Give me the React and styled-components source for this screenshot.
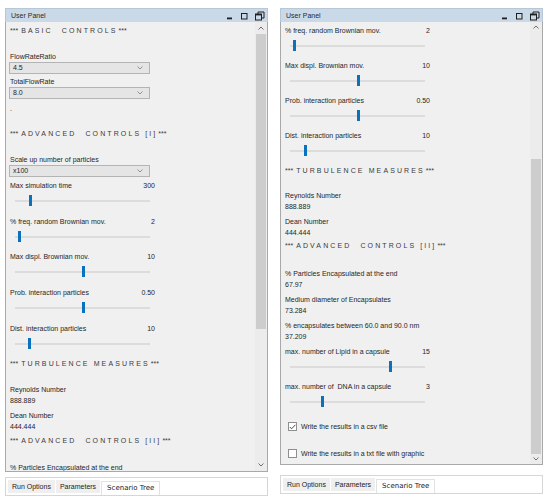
import React from 'react';
import styled, {createGlobalStyle} from 'styled-components';

const GlobalStyle = createGlobalStyle`
   body {
      margin: 0;
      background: #ffffff;
      font-family: "Liberation Sans", Arial, sans-serif;
   }
`;

const Page = styled.div`
   display: flex;
   align-items: flex-start;
   gap: 12px;
   padding: 8px 0 0 5px;
`;

const Window = styled.div`
   width: 263px;
   display: flex;
   flex-direction: column;
`;

const TitleBar = styled.div`
   box-sizing: border-box;
   height: 14px;
   display: flex;
   align-items: center;
   padding: 0 2px 0 5px;
   background: #c9d9e8;
   border: 1px solid #b7c7d6;
   border-bottom: none;
   font-size: 7px;
   color: #2b2b2b;
`;

const Title = styled.div`
   flex: 1;
`;

const TitleIcons = styled.div`
   display: flex;
   align-items: center;
   gap: 7px;
`;

const Body = styled.div`
   box-sizing: border-box;
   height: ${p => p.$height}px;
   display: flex;
   background: #f0f0f0;
   border: 1px solid #a9a9a9;
   border-top: none;
`;

const Content = styled.div`
   flex: 1;
   overflow: hidden;
   padding: 3px 0 0 4px;
   font-size: 7px;
   line-height: 11px;
   color: #262626;
`;

const ScrollBar = styled.div`
   width: 12px;
   display: flex;
   flex-direction: column;
   background: #ececec;
`;

const ScrollArrow = styled.div`
   height: 12px;
   display: flex;
   align-items: center;
   justify-content: center;
`;

const ScrollTrack = styled.div`
   flex: 1;
   display: flex;
   flex-direction: column;
   align-items: center;
`;

const ScrollThumb = styled.div`
   width: 10px;
   background: #cdcdcd;
`;

const Section = styled.div`
   margin-top: ${p => p.$mt || 0}px;
   height: 11px;
   white-space: nowrap;
   color: #3a3a3a;
`;

const Spaced = styled.span`
   letter-spacing: 2.1px;
   margin: 0 1px 0 3px;
`;

const Label = styled.div`
   margin-top: ${p => p.$mt || 0}px;
   width: 145px;
   height: 11px;
   display: flex;
   justify-content: space-between;
   white-space: nowrap;
`;

const Value = styled.div`
   height: 11px;
`;

const Combo = styled.div`
   box-sizing: border-box;
   width: 141px;
   height: 12px;
   margin-left: -1px;
   display: flex;
   align-items: center;
   justify-content: space-between;
   padding: 0 6px 0 3px;
   background: #e5e5e5;
   border: 1px solid #b4b4b4;
   line-height: 10px;
`;

const SliderBox = styled.div`
   position: relative;
   width: 135px;
   height: 24px;
   margin-left: 5px;
   &::before {
      content: '';
      position: absolute;
      left: 0;
      right: 0;
      top: 9px;
      height: 2px;
      background: #dcdcdc;
   }
`;

const SliderThumb = styled.div`
   position: absolute;
   top: 4px;
   width: 3px;
   height: 11px;
   margin-left: -1px;
   background: #0a72bd;
`;

const CheckRow = styled.div`
   margin-top: ${p => p.$mt || 0}px;
   height: 11px;
   display: flex;
   align-items: center;
   gap: 4px;
   padding-left: 3px;
   white-space: nowrap;
`;

const CheckBox = styled.div`
   box-sizing: border-box;
   width: 9px;
   height: 9px;
   display: flex;
   align-items: center;
   justify-content: center;
   background: #ffffff;
   border: 1px solid #8f8f8f;
`;

const TabStrip = styled.div`
   box-sizing: border-box;
   margin-top: ${p => p.$gap}px;
   height: 19px;
   display: flex;
   align-items: flex-start;
   padding: 2px 0 0 2px;
   background: #ffffff;
   border: 1px solid #d6d6d6;
`;

const Tab = styled.div`
   box-sizing: border-box;
   height: ${p => p.$active ? 14 : 13}px;
   margin-top: ${p => p.$active ? 1 : 0}px;
   padding: 0 ${p => p.$active ? 5 : 3}px;
   margin-right: 1px;
   background: ${p => p.$active ? '#ffffff' : '#efefef'};
   border: 1px solid ${p => p.$active ? '#e2e2e2' : '#efefef'};
   border-bottom: none;
   font-family: ${p => p.$active ? '"DejaVu Sans", Verdana, sans-serif' : '"Liberation Sans", Arial, sans-serif'};
   font-size: 7px;
   line-height: ${p => p.$active ? 13 : 12}px;
   color: #222;
`;

const Chevron = ({up, color = '#8a8a8a'}) => (
   <svg width="6" height="4" viewBox="0 0 6 4">
      <polyline
         points={up ? '0.5,3.5 3,1 5.5,3.5' : '0.5,0.5 3,3 5.5,0.5'}
         fill="none" stroke={color} strokeWidth="0.9"/>
   </svg>
);

const WindowIcons = () => (
   <TitleIcons>
      <svg width="7" height="8" viewBox="0 0 7 8">
         <rect x="1" y="5.5" width="5" height="1.8" fill="#1f1f1f"/>
      </svg>
      <svg width="8" height="8" viewBox="0 0 8 8">
         <rect x="1.5" y="1.5" width="5.5" height="5.5" fill="none" stroke="#1f1f1f" strokeWidth="1"/>
      </svg>
      <svg width="10" height="10" viewBox="0 0 10 10">
         <rect x="0.5" y="3" width="6" height="6" fill="none" stroke="#1f1f1f" strokeWidth="1"/>
         <rect x="0.5" y="3" width="6" height="1.4" fill="#1f1f1f"/>
         <polyline points="3,3 3,1 9,1 9,7 6.5,7" fill="none" stroke="#1f1f1f" strokeWidth="1"/>
      </svg>
   </TitleIcons>
);

const SectionTitle = ({mt, words}) => (
   <Section $mt={mt}>
      ***<Spaced>{words}</Spaced>***
   </Section>
);

const Slider = ({label, value, pos, mt}) => [
   <Label key="l" $mt={mt}><span>{label}</span><span>{value}</span></Label>,
   <SliderBox key="s"><SliderThumb style={{left: `${pos * 100}%`}}/></SliderBox>
];

// value is left out where the panel edge hides it
const Readout = ({label, value, mt}) => [
   <Label key="l" $mt={mt}><span>{label}</span></Label>,
   value && <Value key="v">{value}</Value>
];

const Check = ({label, checked, mt}) => (
   <CheckRow $mt={mt}>
      <CheckBox>
         {checked && <svg width="7" height="6" viewBox="0 0 7 6">
            <polyline points="0.8,3 2.6,4.8 6.4,0.8" fill="none" stroke="#333" strokeWidth="0.9"/>
         </svg>}
      </CheckBox>
      {label}
   </CheckRow>
);

const Panel = ({height, tabGap, thumbTop, children}) => (
   <Window>
      <TitleBar>
         <Title>User Panel</Title>
         <WindowIcons/>
      </TitleBar>
      <Body $height={height}>
         <Content>{children}</Content>
         <ScrollBar>
            <ScrollArrow><Chevron up color="#606060"/></ScrollArrow>
            <ScrollTrack>
               <ScrollThumb style={{marginTop: thumbTop, height: 295}}/>
            </ScrollTrack>
            <ScrollArrow><Chevron color="#606060"/></ScrollArrow>
         </ScrollBar>
      </Body>
      <TabStrip $gap={tabGap}>
         <Tab>Run Options</Tab>
         <Tab>Parameters</Tab>
         <Tab $active>Scenario Tree</Tab>
      </TabStrip>
   </Window>
);

const BASIC = 'BASIC\u2003CONTROLS';
const ADV_1 = 'ADVANCED\u2003CONTROLS [I]';
const ADV_2 = 'ADVANCED\u2003CONTROLS [II]';
const TURB = 'TURBULENCE MEASURES';

export default function App() {
   return (
      <Page>
         <GlobalStyle/>
         <Panel height={450} tabGap={5} thumbTop={0}>
            <SectionTitle words={BASIC}/>
            <Label $mt={15}>FlowRateRatio</Label>
            <Combo><span>4.5</span><Chevron/></Combo>
            <Label $mt={2}>TotalFlowRate</Label>
            <Combo><span>8.0</span><Chevron/></Combo>
            <Label $mt={4}>.</Label>
            <SectionTitle mt={14} words={ADV_1}/>
            <Label $mt={15}>Scale up number of particles</Label>
            <Combo><span>x100</span><Chevron/></Combo>
            <Slider mt={3} label="Max simulation time" value="300" pos={0.11}/>
            <Slider mt={1} label="% freq. random Brownian mov." value="2" pos={0.03}/>
            <Slider label="Max displ. Brownian mov." value="10" pos={0.5}/>
            <Slider mt={1} label="Prob. interaction particles" value="0.50" pos={0.5}/>
            <Slider mt={1} label="Dist. interaction particles" value="10" pos={0.1}/>
            <SectionTitle words={TURB}/>
            <Readout mt={15} label="Reynolds Number" value="888.889"/>
            <Readout mt={4} label="Dean Number" value="444.444"/>
            <SectionTitle mt={3} words={ADV_2}/>
            <Readout mt={16} label="% Particles Encapsulated at the end"/>
         </Panel>
         <Panel height={443} tabGap={10} thumbTop={127}>
            <Slider label="% freq. random Brownian mov." value="2" pos={0.03}/>
            <Slider label="Max displ. Brownian mov." value="10" pos={0.5}/>
            <Slider label="Prob. interaction particles" value="0.50" pos={0.5}/>
            <Slider label="Dist. interaction particles" value="10" pos={0.11}/>
            <SectionTitle words={TURB}/>
            <Readout mt={14} label="Reynolds Number" value="888.889"/>
            <Readout mt={4} label="Dean Number" value="444.444"/>
            <SectionTitle mt={2} words={ADV_2}/>
            <Readout mt={17} label="% Particles Encapsulated at the end" value="67.97"/>
            <Readout mt={4} label="Medium diameter of Encapsulates" value="73.284"/>
            <Readout mt={4} label="% encapsulates between 60.0 and 90.0 nm" value="37.209"/>
            <Slider mt={4} label="max. number of Lipid in a capsule" value="15" pos={0.74}/>
            <Slider label={'max. number of\u00a0 DNA in a capsule'} value="3" pos={0.24}/>
            <Check mt={5} checked label="Write the results in a csv file"/>
            <Check mt={16} label="Write the results in a txt file with graphic"/>
         </Panel>
      </Page>
   );
}
